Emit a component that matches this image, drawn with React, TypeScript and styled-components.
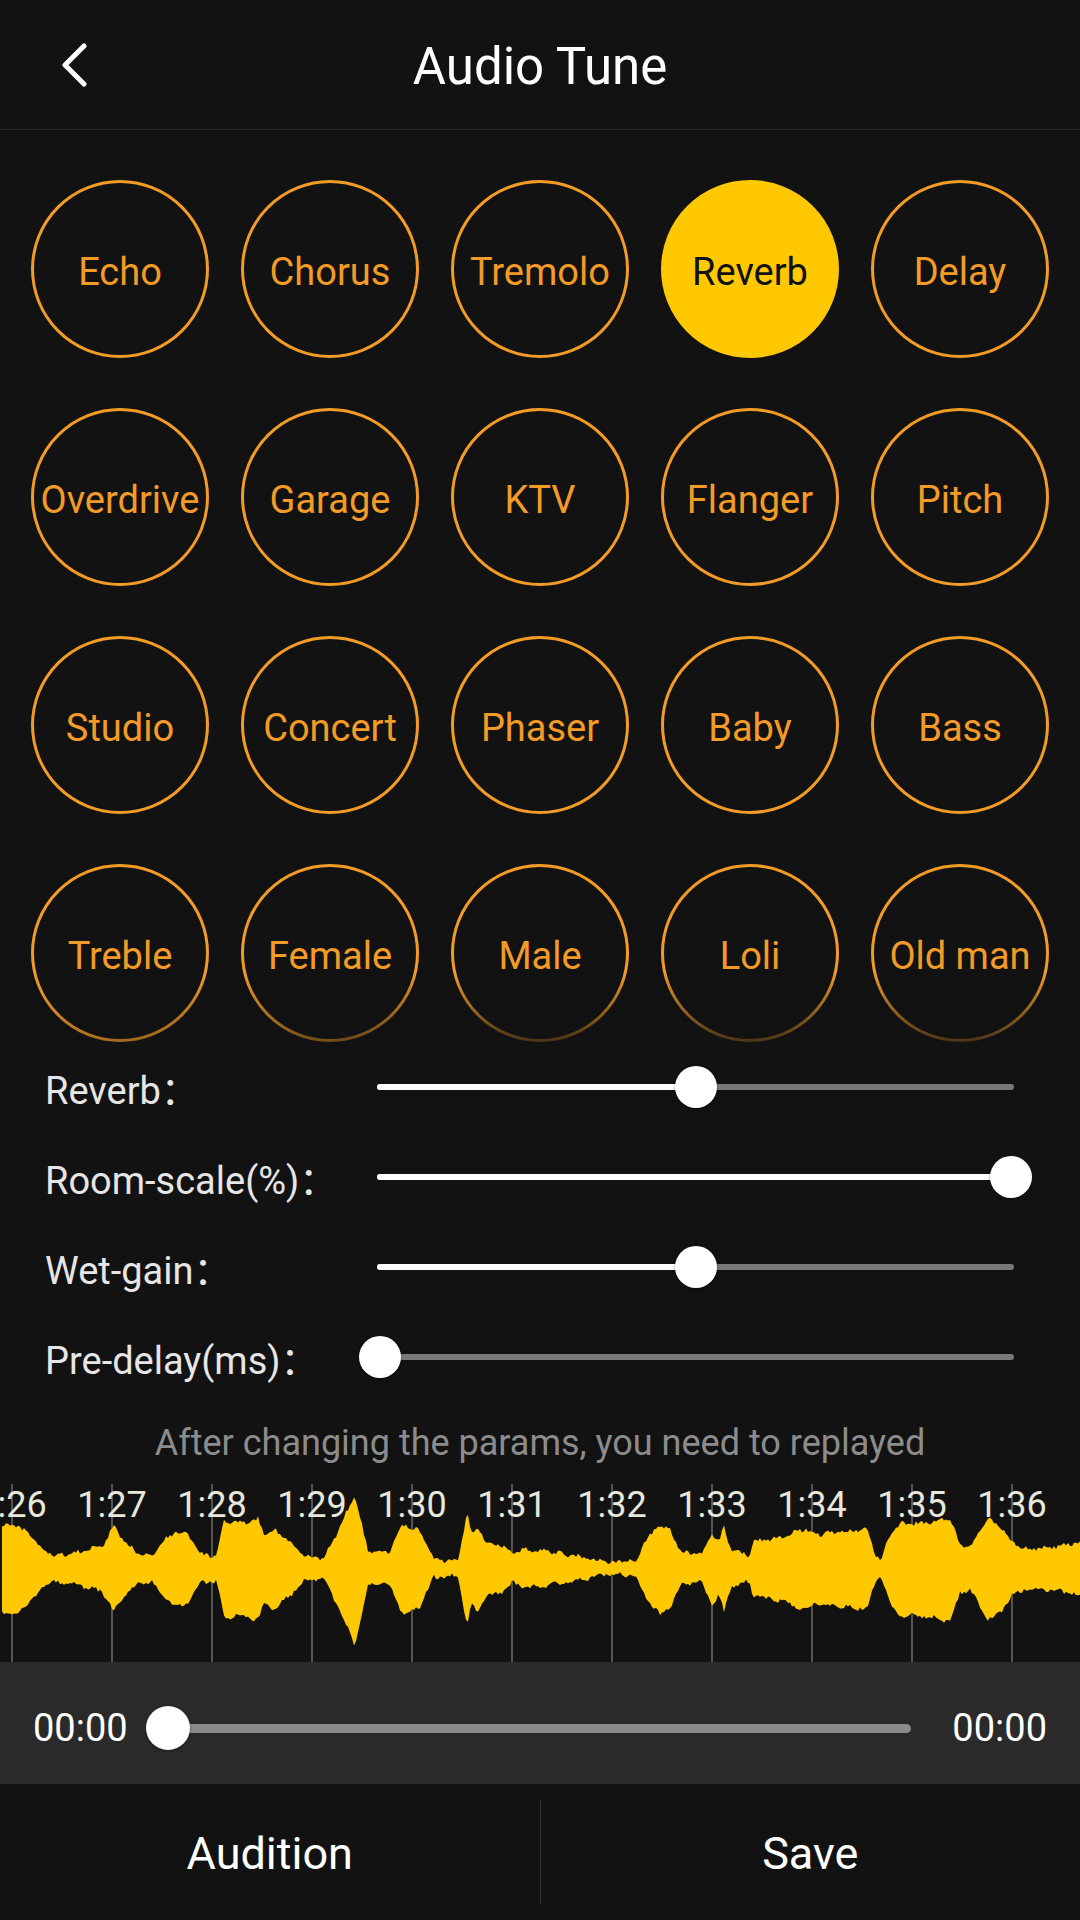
import React from "react";
import styled, { createGlobalStyle } from "styled-components";

const GlobalStyle = createGlobalStyle`
  html, body { margin: 0; padding: 0; background: #121212; }
  body { font-family: Roboto, "Noto Sans CJK SC", sans-serif; }
  * { box-sizing: border-box; }
`;

const ORANGE = "#f29b26";
const YELLOW = "#ffc800";

const Page = styled.div`
  width: 1080px;
  height: 1920px;
  background: #121212;
  display: flex;
  flex-direction: column;
  overflow: hidden;
  color: #fff;
`;

const Header = styled.header`
  height: 130px;
  flex: 0 0 130px;
  display: grid;
  grid-template-columns: 130px 1fr 130px;
  align-items: center;
  border-bottom: 1px solid #262626;
`;

const BackButton = styled.button`
  background: none;
  border: none;
  padding: 0 0 0 60px;
  height: 100%;
  display: flex;
  align-items: center;
  cursor: pointer;
`;

const Title = styled.h1`
  margin: 0;
  text-align: center;
  font-family: Roboto, sans-serif;
  font-weight: 400;
  font-size: 51px;
  color: #fff;
  padding-top: 4px;
`;

const GridWrap = styled.div`
  position: relative;
  padding: 50px 15px 0;
`;

const EffectGrid = styled.div`
  display: grid;
  grid-template-columns: repeat(5, 210px);
  grid-auto-rows: 178px;
  row-gap: 50px;
  justify-items: center;
`;

const EffectButton = styled.button<{ $active?: boolean }>`
  width: 178px;
  height: 178px;
  border-radius: 50%;
  border: 3px solid ${(p) => (p.$active ? YELLOW : ORANGE)};
  background: ${(p) => (p.$active ? YELLOW : "transparent")};
  color: ${(p) => (p.$active ? "#111" : ORANGE)};
  font-family: Roboto, sans-serif;
  font-size: 38px;
  padding: 5px 0 0;
  display: flex;
  align-items: center;
  justify-content: center;
  white-space: nowrap;
  cursor: pointer;
`;

const FadeEdge = styled.div`
  position: absolute;
  left: 0;
  right: 0;
  bottom: 0;
  height: 70px;
  pointer-events: none;
  background: linear-gradient(to bottom, rgba(18, 18, 18, 0) 0%, rgba(18, 18, 18, 0.75) 100%);
  -webkit-mask-image: linear-gradient(to right, rgba(0, 0, 0, 0.3) 0%, #000 45%);
  mask-image: linear-gradient(to right, rgba(0, 0, 0, 0.3) 0%, #000 45%);
`;

const SliderList = styled.div`
  display: flex;
  flex-direction: column;
`;

const SliderRow = styled.div`
  height: 90px;
  display: grid;
  grid-template-columns: 332px 637px;
  align-items: center;
  padding-left: 45px;
`;

const SliderLabel = styled.span`
  font-family: Roboto, "Noto Sans CJK SC", sans-serif;
  font-size: 38px;
  color: #e6e6e6;
  white-space: nowrap;
`;

const Track = styled.div<{ $height: number; $color: string }>`
  position: relative;
  height: ${(p) => p.$height}px;
  border-radius: ${(p) => p.$height / 2}px;
  background: ${(p) => p.$color};
`;

const TrackFill = styled.div`
  position: absolute;
  left: 0;
  top: 0;
  bottom: 0;
  border-radius: inherit;
  background: #fff;
`;

const Thumb = styled.div<{ $size: number }>`
  position: absolute;
  top: 50%;
  width: ${(p) => p.$size}px;
  height: ${(p) => p.$size}px;
  border-radius: 50%;
  background: #fff;
  transform: translate(-50%, -50%);
  box-shadow: 0 1px 3px rgba(0, 0, 0, 0.4);
`;

const Hint = styled.p`
  margin: 0;
  height: 82px;
  line-height: 82px;
  text-align: center;
  font-family: Roboto, sans-serif;
  font-size: 36px;
  color: #8c8c8c;
`;

const Timeline = styled.div`
  height: 178px;
  flex: 0 0 178px;
`;

const PlayerBar = styled.div`
  height: 122px;
  flex: 0 0 122px;
  background: #2a2a2a;
  display: flex;
  align-items: center;
  padding: 10px 33px 0;
`;

const TimeText = styled.span`
  font-family: Roboto, sans-serif;
  font-size: 38px;
  color: #fff;
  flex: 0 0 auto;
`;

const PlayerTrackArea = styled.div`
  flex: 1;
  margin: 0 41px 0 18px;
  position: relative;
`;

const BottomBar = styled.div`
  flex: 1;
  display: grid;
  grid-template-columns: 1fr 1px 1fr;
  align-items: center;
`;

const BottomButton = styled.button`
  background: none;
  border: none;
  height: 100%;
  color: #fff;
  font-family: Roboto, sans-serif;
  font-size: 45px;
  padding: 2px 0 0;
  cursor: pointer;
`;

const Divider = styled.div`
  width: 1px;
  height: 104px;
  background: #333;
`;

const effects = [
  "Echo", "Chorus", "Tremolo", "Reverb", "Delay",
  "Overdrive", "Garage", "KTV", "Flanger", "Pitch",
  "Studio", "Concert", "Phaser", "Baby", "Bass",
  "Treble", "Female", "Male", "Loli", "Old man",
];

const sliders = [
  { label: "Reverb", value: 0.5 },
  { label: "Room-scale(%)", value: 1 },
  { label: "Wet-gain", value: 0.5 },
  { label: "Pre-delay(ms)", value: 0 },
];

const envelope: [number, number][] = [
  [0, 38], [10, 43], [31, 32], [41, 18], [55, 12], [79, 15], [103, 22], [114, 40], [124, 25],
  [138, 15], [152, 12], [162, 25], [176, 35], [189, 32], [200, 13], [217, 12], [224, 45],
  [241, 43], [258, 47], [265, 32], [275, 37], [293, 22], [306, 10], [324, 10], [334, 28],
  [355, 70], [365, 28], [368, 15], [389, 15], [403, 42], [420, 35], [434, 8], [448, 7],
  [458, 8], [467, 53], [472, 32], [477, 40], [486, 25], [499, 23], [513, 13], [523, 18],
  [540, 17], [574, 12], [609, 5], [636, 7], [643, 23], [660, 42], [671, 35], [681, 15],
  [702, 13], [712, 33], [719, 25], [724, 40], [731, 17], [750, 12], [753, 25], [781, 30],
  [805, 38], [815, 32], [843, 35], [867, 37], [876, 12], [881, 7], [891, 35], [902, 43],
  [919, 43], [950, 48], [960, 22], [970, 20], [988, 47], [1001, 40], [1012, 25], [1029, 18],
  [1050, 20], [1067, 22], [1080, 25],
];

function ampAt(x: number) {
  for (let i = 0; i < envelope.length - 1; i++) {
    const [x0, a0] = envelope[i];
    const [x1, a1] = envelope[i + 1];
    if (x >= x0 && x <= x1) {
      const t = x1 === x0 ? 0 : (x - x0) / (x1 - x0);
      return a0 + (a1 - a0) * t;
    }
  }
  return envelope[envelope.length - 1][1];
}

function noise(i: number, seed: number) {
  const s = Math.sin(i * 12.9898 + seed * 78.233) * 43758.5453;
  return s - Math.floor(s);
}

function buildWave(cy: number) {
  const top: string[] = [];
  const bottom: string[] = [];
  for (let x = 2; x <= 1080; x += 2) {
    const a = ampAt(x);
    const nt = (noise(x, 1) - 0.5) * 4 + Math.sin(x * 0.35) * 1.2;
    const nb = (noise(x, 2) - 0.5) * 4 + Math.cos(x * 0.3) * 1.2;
    const at = Math.max(4, a * 1.04 + nt);
    const ab = Math.max(4, a * 1.1 + nb);
    top.push(`${x},${(cy - at).toFixed(1)}`);
    bottom.push(`${x},${(cy + ab).toFixed(1)}`);
  }
  bottom.reverse();
  return `M2,${cy} L${top.join(" L")} L${bottom.join(" L")} Z`;
}

const WAVE_PATH = buildWave(84);

const ticks = Array.from({ length: 11 }, (_, i) => ({ x: 12 + i * 100, label: `1:${26 + i}` }));

function Waveform() {
  return (
    <svg width="1080" height="178" viewBox="0 0 1080 178" style={{ display: "block" }}>
      {ticks.map((t) => (
        <line key={t.x} x1={t.x} x2={t.x} y1={0} y2={178} stroke="rgba(255,255,255,0.38)" strokeWidth={1.5} />
      ))}
      <path d={WAVE_PATH} fill={YELLOW} />
      {ticks.map((t) => (
        <text
          key={t.label}
          x={t.x}
          y={33}
          textAnchor="middle"
          fontFamily="Roboto, sans-serif"
          fontSize={36}
          fill="#e8e8da"
        >
          {t.label}
        </text>
      ))}
    </svg>
  );
}

function ParamSlider({ label, value }: { label: string; value: number }) {
  return (
    <SliderRow>
      <SliderLabel>{label}：</SliderLabel>
      <Track $height={6} $color="#787878">
        <TrackFill style={{ width: `${value * 100}%` }} />
        <Thumb $size={42} style={{ left: `${0.5 + value * 99}%` }} />
      </Track>
    </SliderRow>
  );
}

export default function App() {
  return (
    <>
      <GlobalStyle />
      <Page>
        <Header>
          <BackButton aria-label="Back">
            <svg width="30" height="44" viewBox="0 0 30 44">
              <polyline points="24,3 5,22 24,41" fill="none" stroke="#fff" strokeWidth={5} strokeLinecap="round" strokeLinejoin="round" />
            </svg>
          </BackButton>
          <Title>Audio Tune</Title>
          <div />
        </Header>

        <GridWrap>
          <EffectGrid>
            {effects.map((e) => (
              <EffectButton key={e} $active={e === "Reverb"}>
                {e}
              </EffectButton>
            ))}
          </EffectGrid>
          <FadeEdge />
        </GridWrap>

        <SliderList>
          {sliders.map((s) => (
            <ParamSlider key={s.label} label={s.label} value={s.value} />
          ))}
        </SliderList>

        <Hint>After changing the params, you need to replayed</Hint>

        <Timeline>
          <Waveform />
        </Timeline>

        <PlayerBar>
          <TimeText>00:00</TimeText>
          <PlayerTrackArea>
            <Track $height={9} $color="#8a8a8a">
              <Thumb $size={44} style={{ left: "22px" }} />
            </Track>
          </PlayerTrackArea>
          <TimeText>00:00</TimeText>
        </PlayerBar>

        <BottomBar>
          <BottomButton>Audition</BottomButton>
          <Divider />
          <BottomButton>Save</BottomButton>
        </BottomBar>
      </Page>
    </>
  );
}
